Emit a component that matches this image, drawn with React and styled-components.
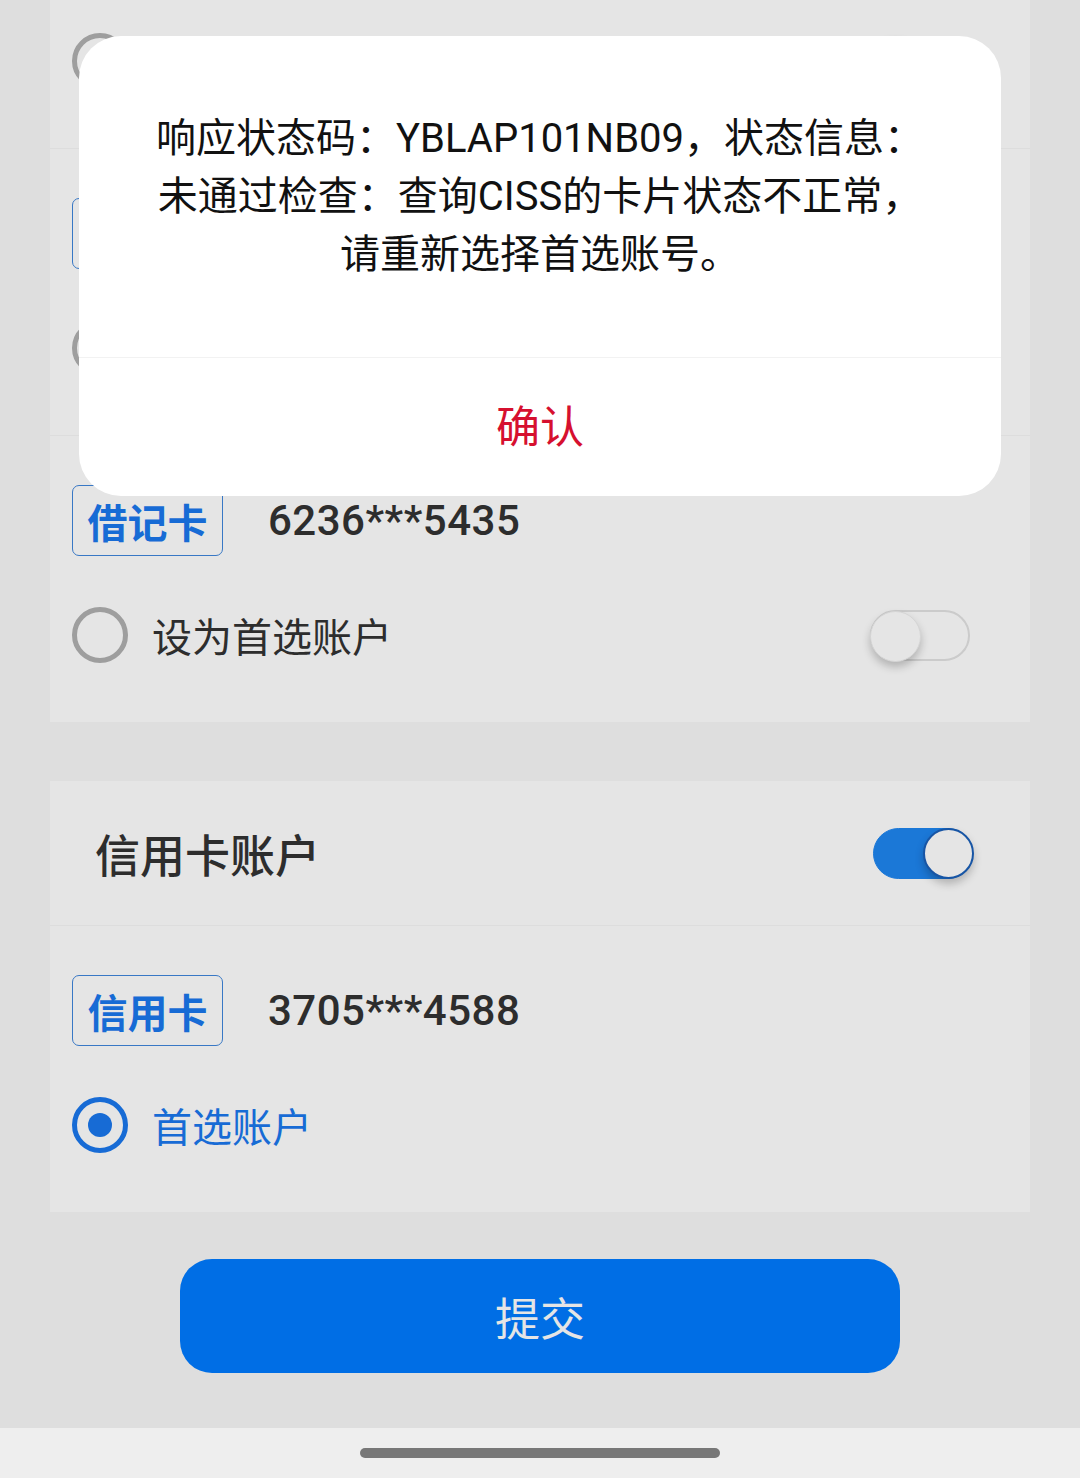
import styled, { createGlobalStyle, css } from 'styled-components';

const GlobalStyle = createGlobalStyle`
  html, body {
    margin: 0;
    padding: 0;
    background: #f8f8f8;
  }
  body {
    font-family: Roboto, "Noto Sans CJK SC", sans-serif;
    color: #333;
  }
`;

const Screen = styled.div`
  width: 1080px;
  height: 1478px;
  display: flex;
  flex-direction: column;
  overflow: hidden;
`;

const Viewport = styled.div`
  position: relative;
  height: 1428px;
  overflow: hidden;
  background: #f8f8f8;
`;

const Scroller = styled.div`
  display: flex;
  flex-direction: column;
  align-items: center;
  margin-top: -139px;
`;

const Card = styled.section`
  width: 980px;
  background: #ffffff;
  display: flex;
  flex-direction: column;
  margin-bottom: ${(p) => p.$gap || 0}px;
`;

const CardHeader = styled.div`
  height: 144px;
  box-sizing: border-box;
  padding: 0 57px 0 45px;
  display: flex;
  align-items: center;
  justify-content: space-between;
`;

const CardTitle = styled.h2`
  margin: 0;
  font-size: 45px;
  font-weight: 500;
  color: #333;
`;

const Item = styled.div`
  height: 287px;
  box-sizing: border-box;
  padding: 49px 60px 0 22px;
  border-top: 1px solid ${(p) => (p.$first ? 'transparent' : '#f6f6f6')};
  display: flex;
  flex-direction: column;
`;

const TagRow = styled.div`
  display: flex;
  align-items: center;
  height: 71px;
`;

const Tag = styled.span`
  width: 151px;
  height: 71px;
  box-sizing: border-box;
  border: 1.5px solid #3f86dc;
  border-radius: 7px;
  display: flex;
  align-items: center;
  justify-content: center;
  font-size: 40px;
  font-weight: 700;
  color: #1a78ee;
`;

const CardNo = styled.span`
  margin-left: 45px;
  font-size: 42px;
  font-weight: 500;
  letter-spacing: 0.5px;
  color: #333;
`;

const OptionRow = styled.div`
  margin-top: 51px;
  height: 56px;
  display: flex;
  align-items: center;
`;

const Radio = styled.span`
  width: 56px;
  height: 56px;
  box-sizing: border-box;
  border-radius: 50%;
  border: 5px solid ${(p) => (p.$checked ? '#1a78ee' : '#b0b0b0')};
  display: flex;
  align-items: center;
  justify-content: center;
  flex-shrink: 0;
  &::after {
    content: '';
    width: 24px;
    height: 24px;
    border-radius: 50%;
    background: #1a78ee;
    display: ${(p) => (p.$checked ? 'block' : 'none')};
  }
`;

const OptionLabel = styled.span`
  margin-left: 24px;
  font-size: 40px;
  color: ${(p) => (p.$active ? '#1a78ee' : '#333')};
`;

const Spacer = styled.span`
  flex: 1;
`;

const Switch = styled.span`
  position: relative;
  width: 100px;
  height: 51px;
  box-sizing: border-box;
  border-radius: 26px;
  ${(p) =>
    p.$on
      ? css`
          background: #1f86f0;
          border: 1px solid #1f86f0;
        `
      : css`
          background: #ffffff;
          border: 2px solid #e2e2e2;
        `}
  &::after {
    content: '';
    position: absolute;
    top: -1px;
    ${(p) => (p.$on ? 'right: -2px;' : 'left: -2px;')}
    width: 51px;
    height: 51px;
    box-sizing: border-box;
    border-radius: 50%;
    background: #ffffff;
    border: ${(p) => (p.$on ? '2px solid #1a5fb8' : '1px solid #eeeeee')};
    box-shadow: 0 5px 8px rgba(0, 0, 0, 0.22);
  }
`;

const SubmitButton = styled.button`
  margin-top: 47px;
  width: 720px;
  height: 114px;
  border: none;
  border-radius: 32px;
  background: #007bff;
  color: #ffffff;
  font-family: Roboto, "Noto Sans CJK SC", sans-serif;
  font-size: 45px;
`;

const Mask = styled.div`
  position: absolute;
  inset: 0;
  background: rgba(0, 0, 0, 0.1);
`;

const Dialog = styled.div`
  position: absolute;
  left: 79px;
  top: 36px;
  width: 922px;
  background: #ffffff;
  border-radius: 42px;
  overflow: hidden;
  display: flex;
  flex-direction: column;
`;

const Message = styled.p`
  margin: 0;
  padding: 74px 40px 73px;
  text-align: center;
  font-size: 40px;
  line-height: 58px;
  color: #111;
`;

const DialogAction = styled.div`
  height: 139px;
  padding-bottom: 6px;
  box-sizing: border-box;
  border-top: 1px solid #f2f2f2;
  display: flex;
  align-items: center;
  justify-content: center;
  font-size: 44px;
  color: #d6102f;
`;

const NavBar = styled.div`
  height: 50px;
  background: #eeeeee;
  display: flex;
  align-items: center;
  justify-content: center;
`;

const HomeHandle = styled.span`
  width: 360px;
  height: 10px;
  border-radius: 5px;
  background: #777777;
`;

const AccountItem = ({ tag, number, checked, first, toggle }) => (
  <Item $first={first}>
    <TagRow>
      <Tag>{tag}</Tag>
      <CardNo>{number}</CardNo>
    </TagRow>
    <OptionRow>
      <Radio $checked={checked} />
      <OptionLabel $active={checked}>{checked ? '首选账户' : '设为首选账户'}</OptionLabel>
      <Spacer />
      {toggle && <Switch />}
    </OptionRow>
  </Item>
);

export default function App() {
  return (
    <Screen>
      <GlobalStyle />
      <Viewport>
        <Scroller>
          <Card $gap={59}>
            <AccountItem first tag="借记卡" number="6217***0913" toggle />
            <AccountItem tag="借记卡" number="6222***1208" />
            <AccountItem tag="借记卡" number="6236***5435" toggle />
          </Card>
          <Card>
            <CardHeader>
              <CardTitle>信用卡账户</CardTitle>
              <Switch $on />
            </CardHeader>
            <AccountItem tag="信用卡" number="3705***4588" checked />
          </Card>
          <SubmitButton>提交</SubmitButton>
        </Scroller>
        <Mask />
        <Dialog>
          <Message>
            响应状态码：YBLAP101NB09，状态信息：
            <br />
            未通过检查：查询CISS的卡片状态不正常，
            <br />
            请重新选择首选账号。
          </Message>
          <DialogAction>确认</DialogAction>
        </Dialog>
      </Viewport>
      <NavBar>
        <HomeHandle />
      </NavBar>
    </Screen>
  );
}
